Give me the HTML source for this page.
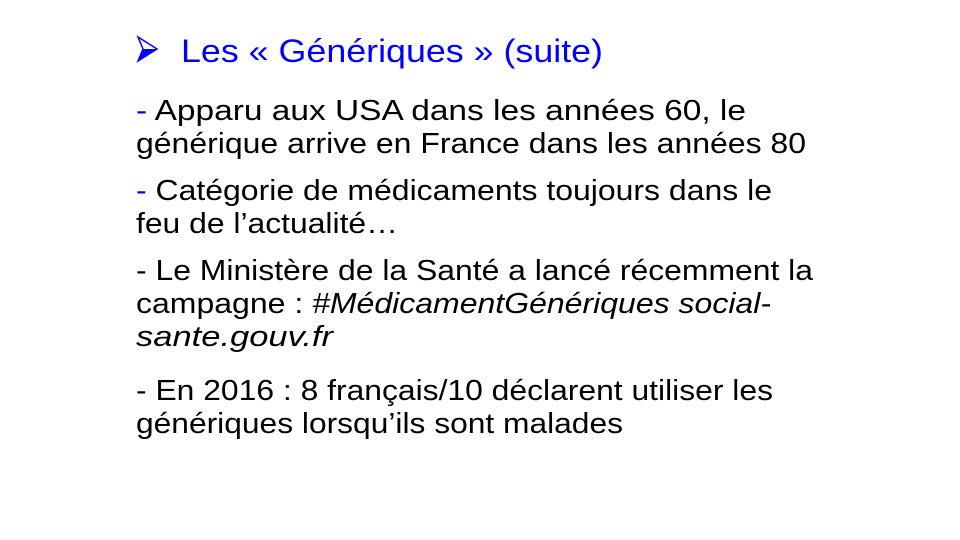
<!DOCTYPE html>
<html><head><meta charset="utf-8"><style>
html,body{margin:0;padding:0;background:#fff;width:960px;height:540px;overflow:hidden}
svg{display:block}
text{font-family:"Liberation Sans",Arial,sans-serif;font-size:28.5px;fill:#000}
.t{fill:#0000ff;font-size:32.5px}
</style></head><body>
<svg width="960" height="540" viewBox="0 0 960 540">
<path d="M138 37 L157 49 L138 61 L143 49 Z" fill="none" stroke="#0000ff" stroke-width="1.5"/>
<path d="M138 61 L157 49 L143 49 Z" fill="#0000ff"/>
<text class="t" x="181" y="62" textLength="422" lengthAdjust="spacingAndGlyphs">Les « Génériques » (suite)</text>

<text x="136" y="120" textLength="610" lengthAdjust="spacingAndGlyphs"><tspan fill="#0000ff">-</tspan> Apparu aux USA dans les années 60, le</text>
<text x="136" y="153" textLength="670" lengthAdjust="spacingAndGlyphs">générique arrive en France dans les années 80</text>

<text x="136" y="200" textLength="636" lengthAdjust="spacingAndGlyphs"><tspan fill="#0000ff">-</tspan> Catégorie de médicaments toujours dans le</text>
<text x="136" y="233" textLength="262" lengthAdjust="spacingAndGlyphs">feu de l’actualité…</text>

<text x="136" y="280" textLength="677" lengthAdjust="spacingAndGlyphs">- Le Ministère de la Santé a lancé récemment la</text>
<text x="136" y="313" textLength="635" lengthAdjust="spacingAndGlyphs">campagne : <tspan font-style="italic">#MédicamentGénériques social-</tspan></text>
<text x="136" y="346" textLength="197" lengthAdjust="spacingAndGlyphs" font-style="italic">sante.gouv.fr</text>

<text x="136" y="400" textLength="637" lengthAdjust="spacingAndGlyphs">- En 2016 : 8 français/10 déclarent utiliser les</text>
<text x="136" y="433" textLength="487" lengthAdjust="spacingAndGlyphs">génériques lorsqu’ils sont malades</text>
</svg>
</body></html>
